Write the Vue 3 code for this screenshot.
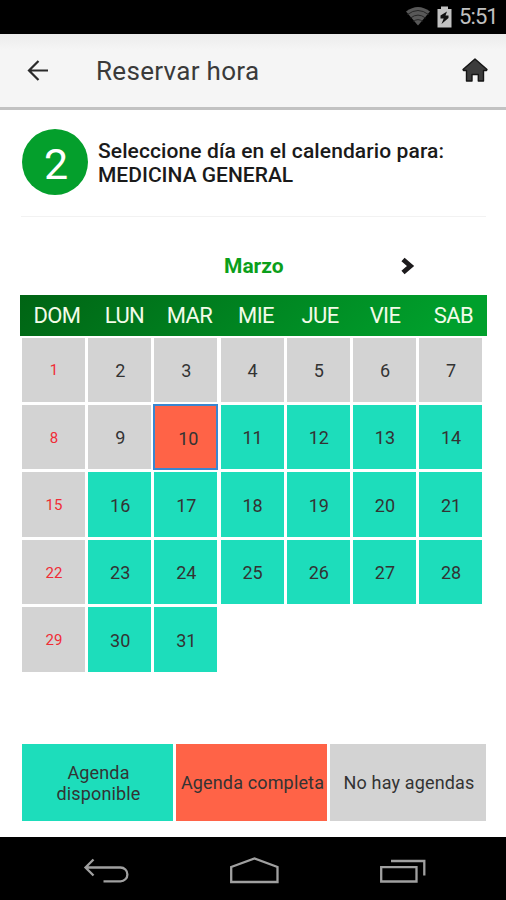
<template>
  <div class="pantalla">
    <div class="barra-estado">
      <svg class="icono-wifi" width="26" height="20" viewBox="0 0 26 20">
        <path d="M1 5.5Q13 -3.5 25 5.5L13 19.5Z" fill="#585858" />
        <path
          d="M2.5 8.5Q13 0.5 23.5 8.5M5.5 12Q13 6.2 20.5 12M8.5 15.3Q13 12 17.5 15.3"
          fill="none"
          stroke="#262626"
          stroke-width="1"
        />
      </svg>
      <svg class="icono-bateria" width="15" height="22" viewBox="0 0 15 22">
        <path d="M4 0.5h7v2.5h3.5V21.5H0.5V3H4z" fill="#c2c2c2" />
        <path d="M10 5.5L3.5 9.5V12.500h3.200L4.500 18L11.500 12V9.500H8.500z" fill="#111" />
      </svg>
      <span class="reloj">5:51</span>
    </div>

    <header class="cabecera">
      <button class="boton-icono" aria-label="Volver">
        <svg width="22" height="22" viewBox="0 0 22 22">
          <path
            d="M21 11.500H2M11.500 2L2 11.500L11.500 21"
            fill="none"
            stroke="#2a2a2a"
            stroke-width="2.200"
          />
        </svg>
      </button>
      <h1 class="titulo">Reservar hora</h1>
      <button class="boton-icono" aria-label="Inicio">
        <svg width="26" height="24" viewBox="0 0 26 24">
          <path
            d="M13 1L25 11.500L24.500 12.500H21.500V23H16.300V16.500H10V23H4.500V12.500H1.500L1 11.500Z"
            fill="#3c3c3c"
            stroke="#151515"
            stroke-width="1.400"
            stroke-linejoin="round"
          />
        </svg>
      </button>
    </header>

    <main class="contenido">
      <section class="paso">
        <div class="numero-paso">2</div>
        <p class="texto-paso">
          <span class="instruccion">Seleccione día en el calendario para:</span><br />
          <span class="especialidad">MEDICINA GENERAL</span>
        </p>
      </section>

      <div class="selector-mes">
        <span class="mes">Marzo</span>
        <button class="boton-icono" aria-label="Mes siguiente">
          <svg width="15" height="18" viewBox="0 0 15 18">
            <path
              d="M3 2.500L10.500 9L3 15.500"
              fill="none"
              stroke="#1c1a1c"
              stroke-width="4.800"
            />
          </svg>
        </button>
      </div>

      <div class="semana">
        <span v-for="nombre in diasSemana" :key="nombre">{{ nombre }}</span>
      </div>
      <div class="calendario">
        <button
          v-for="dia in dias"
          :key="dia.numero"
          class="dia"
          :class="[dia.estado, { domingo: dia.domingo, seleccionado: dia.numero === seleccionado }]"
          @click="seleccionado = dia.numero"
        >
          {{ dia.numero }}
        </button>
      </div>

      <div class="leyenda">
        <div class="disponible">Agenda<br />disponible</div>
        <div class="completa">Agenda completa</div>
        <div class="sin-agenda">No hay agendas</div>
      </div>
    </main>

    <nav class="barra-navegacion">
      <svg width="46" height="26" viewBox="0 0 46 26">
        <path
          d="M10.500 1.500L2.500 9.500L10.500 17.500M3 9.500H37.500A6.900 6.900 0 0 1 37.500 23.300H20.500"
          fill="none"
          stroke="#a0a0a0"
          stroke-width="2.300"
        />
      </svg>
      <svg width="50" height="28" viewBox="0 0 50 28">
        <path
          d="M1.200 25V10L24.500 1.500L47.500 10V25Z"
          fill="none"
          stroke="#a0a0a0"
          stroke-width="2.300"
        />
      </svg>
      <svg width="46" height="24" viewBox="0 0 46 24">
        <path
          d="M1.200 8.200H36.500V22.500H1.200ZM11 2H44.300V16.500"
          fill="none"
          stroke="#a0a0a0"
          stroke-width="2.300"
        />
      </svg>
    </nav>
  </div>
</template>

<script setup>
import { ref } from "vue";

const diasSemana = ["DOM", "LUN", "MAR", "MIE", "JUE", "VIE", "SAB"];
const seleccionado = ref(10);

function estadoDia(numero) {
  if (numero < 10 || numero % 7 === 1) return "sin-agenda";
  if (numero === 10) return "completa";
  return "disponible";
}

// El mes comienza en domingo
const dias = Array.from({ length: 31 }, (_, i) => ({
  numero: i + 1,
  domingo: i % 7 === 0,
  estado: estadoDia(i + 1),
}));
</script>

<style>
body {
  margin: 0;
  background: #fff;
}
</style>

<style scoped>
.pantalla {
  width: 506px;
  height: 900px;
  display: flex;
  flex-direction: column;
  overflow: hidden;
  background: #fff;
  color: #333;
  font-family: Roboto, "Liberation Sans", sans-serif;
}

button {
  font: inherit;
  border: none;
  padding: 0;
  cursor: pointer;
}

.boton-icono {
  display: flex;
  background: none;
}

.barra-estado {
  height: 34px;
  flex: none;
  box-sizing: border-box;
  display: flex;
  align-items: center;
  justify-content: flex-end;
  padding-right: 9px;
  background: #000;
}

.icono-wifi {
  margin: 0 6px 2px 0;
}

.icono-bateria {
  margin: 0 7px 1px 0;
}

.reloj {
  width: 38px;
  font-size: 22px;
  line-height: 34px;
  letter-spacing: -0.9px;
  color: #c0c0c0;
  white-space: nowrap;
}

.cabecera {
  height: 76px;
  flex: none;
  box-sizing: border-box;
  display: flex;
  align-items: center;
  padding: 0 18px 2px 27px;
  background: linear-gradient(#ececec, #f5f5f5 16px);
  border-bottom: 3px solid #c2c2c2;
}

.titulo {
  flex: 1;
  margin: 2px 0 0 47px;
  font-size: 26px;
  font-weight: 400;
  letter-spacing: 0.3px;
  color: #3a3a3a;
}

.contenido {
  flex: 1;
  padding: 0 20px;
}

.paso {
  height: 106px;
  display: flex;
  align-items: center;
  margin: 0 0 0 1px;
  border-bottom: 1px solid #f2f2f2;
}

.numero-paso {
  width: 66px;
  height: 66px;
  margin: 0 10px 2px 1px;
  border-radius: 50%;
  background: #049f2c;
  color: #fff;
  font-size: 43px;
  line-height: 70px;
  text-align: center;
  text-indent: 2px;
}

.texto-paso {
  margin: 0;
  font-size: 21px;
  line-height: 24.5px;
  font-weight: 500;
  color: #1a1a1a;
  white-space: nowrap;
}

.instruccion {
  letter-spacing: 0.1px;
}

.selector-mes {
  height: 78px;
  display: flex;
  align-items: center;
  padding: 20px 0 0 204px;
  box-sizing: border-box;
}

.mes {
  width: 176px;
  font-size: 21px;
  font-weight: 700;
  color: #0b9f1b;
}

.semana {
  height: 41px;
  display: grid;
  grid-template-columns: 74px 61px 69px 64px 64px 66px 71px;
  margin-right: -1px;
  background: linear-gradient(135deg, #006414, #00a02c 90%);
  color: #f2fbe8;
  font-size: 22px;
  line-height: 42px;
  letter-spacing: -0.6px;
  text-align: center;
}

.calendario {
  display: grid;
  grid-template-columns: repeat(7, 63px);
  grid-auto-rows: 64.3px;
  gap: 3.2px;
  margin: 1.5px 0 0 2px;
}

.dia {
  padding: 1px 0 0 1px;
  font-size: 18px;
  color: #333;
}

.dia.domingo {
  font-size: 15px;
  color: #f02c36;
}

.dia.seleccionado {
  outline: 2px solid #3a86d0;
  outline-offset: -1px;
  padding: 3px 0 0 5px;
}

.disponible {
  background: #1dddbb;
}

.completa {
  background: #ff6347;
}

.sin-agenda {
  background: #d3d3d3;
}

.leyenda {
  height: 77px;
  display: grid;
  grid-template-columns: 151px 151px 156px;
  gap: 3px;
  margin: 72px 0 0 2px;
  font-size: 18px;
  line-height: 21px;
  letter-spacing: 0.15px;
  text-align: center;
  white-space: nowrap;
}

.leyenda > div {
  display: flex;
  align-items: center;
  justify-content: center;
  padding: 1px 0 0 2px;
  box-sizing: border-box;
}

.barra-navegacion {
  height: 63px;
  flex: none;
  display: flex;
  align-items: center;
  justify-content: space-between;
  box-sizing: border-box;
  padding: 4px 80px 0 83px;
  background: #000;
}
</style>
